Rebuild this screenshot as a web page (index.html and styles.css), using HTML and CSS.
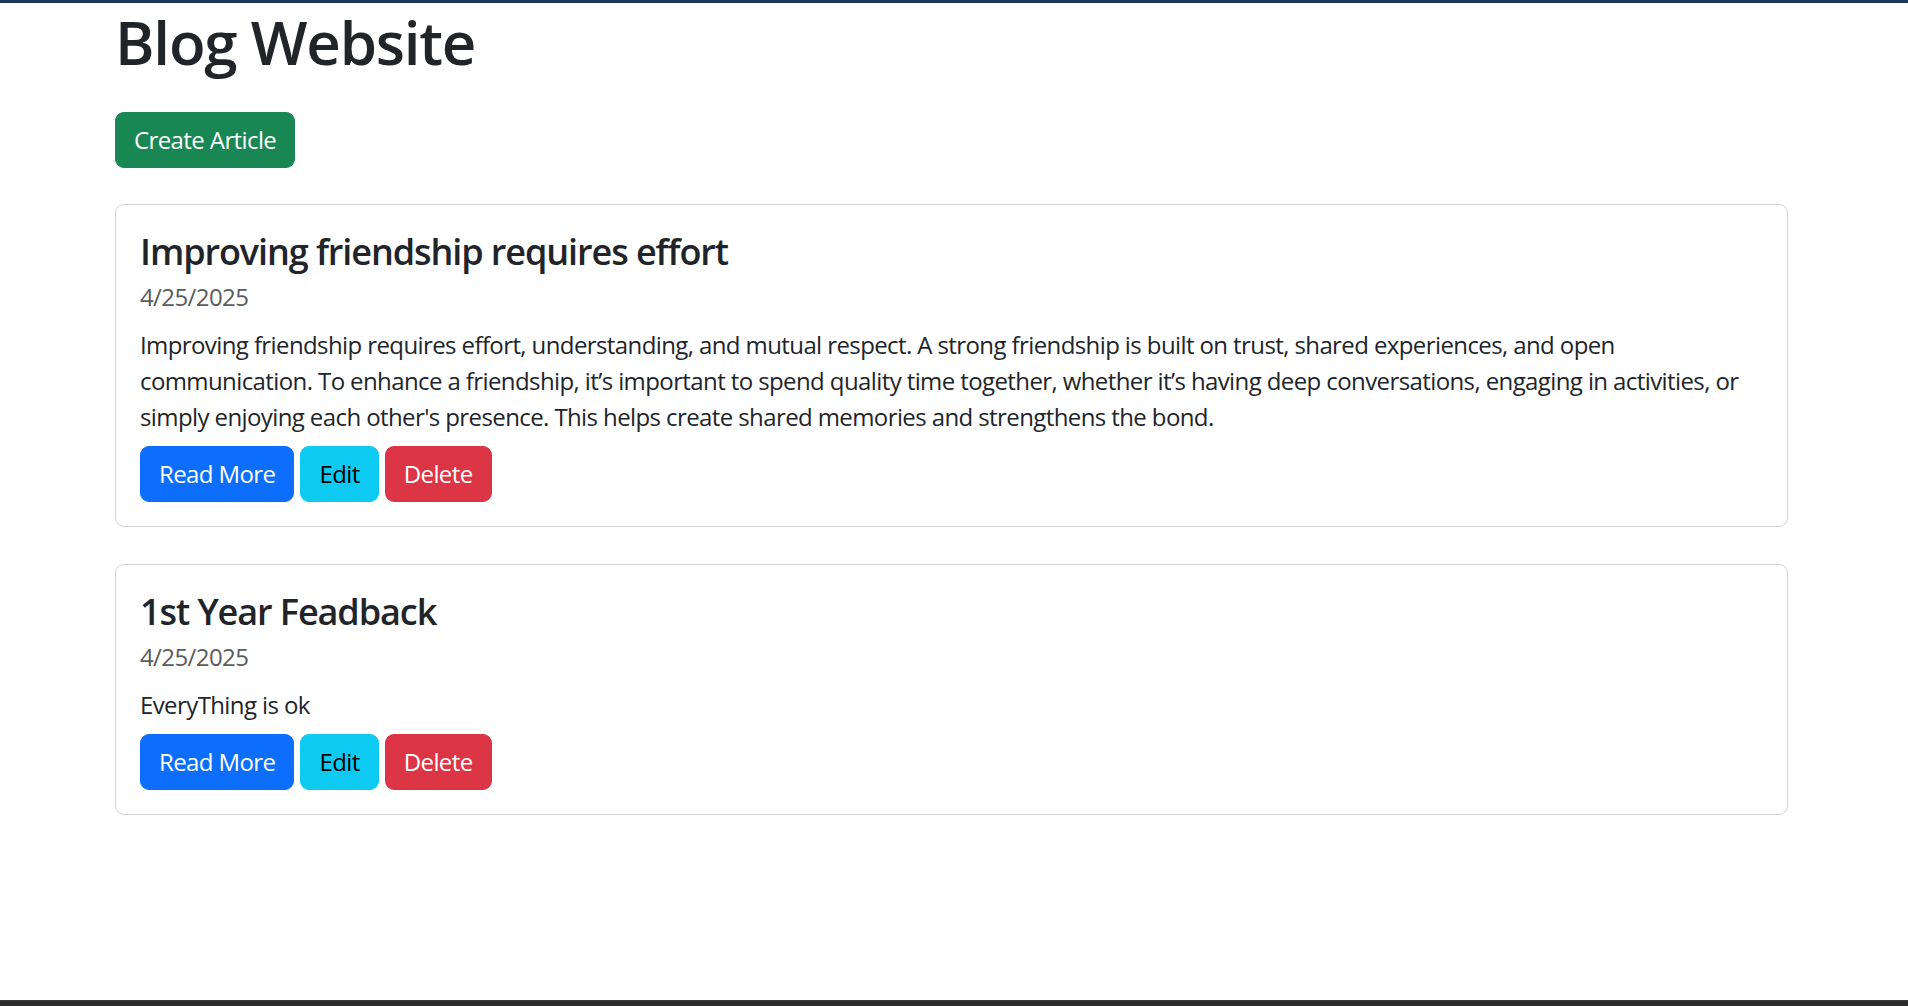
FILE: index.html
```html
<!DOCTYPE html>
<html lang="en">
<head>
<meta charset="utf-8">
<title>Blog Website</title>
<link rel="stylesheet" href="styles.css">
</head>
<body>
<div class="topbar"></div>
<main class="container">
  <h1 class="page-title">Blog Website</h1>
  <a class="btn btn-success create-btn" href="#">Create Article</a>

  <article class="card">
    <h4 class="card-title">Improving friendship requires effort</h4>
    <p class="card-date">4/25/2025</p>
    <p class="card-text">Improving friendship requires effort, understanding, and mutual respect. A strong friendship is built on trust, shared experiences, and open communication. To enhance a friendship, it’s important to spend quality time together, whether it’s having deep conversations, engaging in activities, or simply enjoying each other's presence. This helps create shared memories and strengthens the bond.</p>
    <div class="actions">
      <a class="btn btn-primary" href="#">Read More</a>
      <a class="btn btn-info" href="#">Edit</a>
      <a class="btn btn-danger" href="#">Delete</a>
    </div>
  </article>

  <article class="card">
    <h4 class="card-title">1st Year Feadback</h4>
    <p class="card-date">4/25/2025</p>
    <p class="card-text">EveryThing is ok</p>
    <div class="actions">
      <a class="btn btn-primary" href="#">Read More</a>
      <a class="btn btn-info" href="#">Edit</a>
      <a class="btn btn-danger" href="#">Delete</a>
    </div>
  </article>
</main>
<div class="bottombar"></div>
</body>
</html>
```

FILE: styles.css
```css
html, body {
  margin: 0;
  padding: 0;
  background: #ffffff;
}

body {
  font-family: "Open Sans", "Noto Sans", sans-serif;
  font-size: 24px;
  line-height: 36px;
  color: #212529;
  letter-spacing: -0.025em;
}

.topbar {
  height: 3px;
  background: #1b365a;
}

.container {
  width: 1673px;
  margin-left: 115px;
  display: flex;
  flex-direction: column;
  align-items: flex-start;
}

.page-title {
  margin: 3px 0 34px 0;
  font-size: 60px;
  line-height: 72px;
  font-weight: 600;
  letter-spacing: -0.02em;
}

.btn {
  display: inline-block;
  padding: 9px 18px;
  border: 1px solid transparent;
  border-radius: 9px;
  font-size: 24px;
  line-height: 36px;
  text-decoration: none;
  white-space: nowrap;
}

.btn-success { background: #198754; border-color: #198754; color: #ffffff; }
.btn-primary { background: #0d6efd; border-color: #0d6efd; color: #ffffff; }
.btn-info    { background: #0dcaf0; border-color: #0dcaf0; color: #000000; }
.btn-danger  { background: #dc3545; border-color: #dc3545; color: #ffffff; }

.create-btn {
  margin-bottom: 36px;
}

.card {
  align-self: stretch;
  border: 1px solid #d3d3d4;
  border-radius: 9px;
  padding: 24px;
  margin-bottom: 37px;
}

.card-title {
  margin: 1px 0 6px 0;
  font-size: 36px;
  line-height: 43px;
  font-weight: 600;
  letter-spacing: -0.03em;
}

.card-date {
  margin: 0 0 12px 0;
  color: #595c5f;
}

.card-text {
  margin: 0 0 11px 0;
}

.actions {
  display: flex;
  gap: 6px;
}

.bottombar {
  position: fixed;
  left: 0;
  right: 0;
  bottom: 0;
  height: 5px;
  background: #2b2b2b;
  border-top: 1px solid #3a3a3a;
}
```
